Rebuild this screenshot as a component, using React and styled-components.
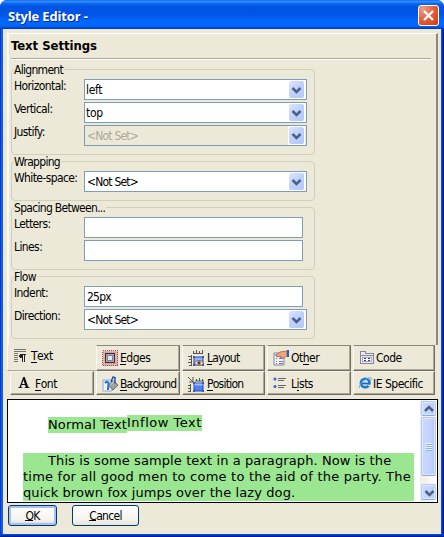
import React from "react";
import styled, { createGlobalStyle, css } from "styled-components";

const face = "#ece9d8";

const GlobalStyle = createGlobalStyle`
  *, *::before, *::after { box-sizing: border-box; }
  body { margin: 0; background: #fff; }
`;

const Window = styled.div`
  width: 444px;
  height: 537px;
  overflow: hidden;
  display: flex;
  flex-direction: column;
  padding: 0 3px 3px;
  border-radius: 7px 7px 0 0;
  background:
    linear-gradient(#0855dd, #0030b8 50%, #00138c) bottom / 100% 3px no-repeat,
    linear-gradient(90deg, #0019cf 0, #0855dd 1px, #166aee 2px, #0855dd 3px, #0855dd 441px, #0441d8 442px, #001ea0 443px, #00138c 444px);
  font-family: "DejaVu Sans Condensed", "DejaVu Sans", sans-serif;
  font-stretch: condensed;
  font-size: 12px;
  line-height: 14px;
  letter-spacing: -0.7px;
  color: #000;
  white-space: nowrap;
`;

const TitleBar = styled.header`
  flex: none;
  height: 29px;
  margin: 0 -3px;
  padding: 5px 5px 3px 8px;
  display: flex;
  justify-content: space-between;
  background: linear-gradient(#0058e6 0, #3a93ff 1px, #2687fc 2px, #0b61ec 4px, #0054e3 7px, #0055e5 14px, #0065fa 20px, #0069ff 25px, #005bec 27px, #003dd0 28px, #0036b8 29px);
`;

const Title = styled.h1`
  margin: 0;
  font: bold 13px/22px "Open Sans", sans-serif;
  letter-spacing: -0.15px;
  color: #fff;
  text-shadow: 1px 1px #0a2a90;
`;

const CloseButton = styled.button`
  width: 21px;
  height: 21px;
  padding: 0;
  border: 1px solid #fff;
  border-radius: 3px;
  background: radial-gradient(circle at 20% 15%, #e9a08a 0, #e5694a 40%, #dd4a22 75%, #c83a10 100%);
  svg { display: block; }
`;

const Client = styled.main`
  flex: 1;
  background: ${face};
  padding: 4px 3px 0 4px;
`;

const Page = styled.section`
  height: 312px;
  width: 431px;
  border-top: 1px solid #fff;
  border-left: 2px solid #faf9f2;
  border-right: 2px solid #8b897a;
  padding: 3px 5px 0 2px;
  display: flex;
  flex-direction: column;
`;

const Heading = styled.h2`
  margin: 0;
  height: 22px;
  font: bold 13px/18px "DejaVu Sans", sans-serif;
  font-stretch: condensed;
  letter-spacing: -0.05px;
  border-bottom: 1px solid #aca899;
  box-shadow: 0 1px #fff;
`;

const Group = styled.section`
  flex: none;
  width: 304px;
  height: ${(p) => p.$height}px;
  margin-top: ${(p) => p.$gap}px;
  border: 1px solid #d0d0bf;
  border-radius: 4px;
  padding: 0 0 0 2px;
`;

const Legend = styled.div`
  width: max-content;
  height: 14px;
  margin: -7px 0 -5px;
  padding-right: 1px;
  background: ${face};
`;

const Fields = styled.div`
  display: grid;
  grid-template-columns: 70px 223px;
  grid-auto-rows: 21px;
  row-gap: 2px;
  padding-top: 7px;
`;

const Label = styled.label`
  line-height: 14px;
  letter-spacing: -0.6px;
`;

const Box = styled.div`
  width: ${(p) => (p.$wide ? 223 : 219)}px;
  height: 21px;
  border: 1px solid #7f9db9;
  background: ${(p) => (p.$disabled ? face : "#fff")};
  color: ${(p) => (p.$disabled ? "#aca899" : "#000")};
  display: flex;
  justify-content: space-between;
  padding: 0 1px 0 ${(p) => (p.$tight ? 1 : 2)}px;
  line-height: 20px;
  letter-spacing: ${(p) => (p.$tight ? -0.35 : -0.8)}px;
`;

const DropButton = styled.span`
  width: 17px;
  height: 19px;
  padding: 1px 0 1px 1px;
  background: #fff;
  svg { display: block; border-radius: 2px; background: linear-gradient(135deg, #dce6ff, #bfd0fc 50%, #b3c7f8); }
`;

const Tabs = styled.nav`
  display: grid;
  grid-template-columns: 86px 86px 85px 86px 84px;
  grid-template-rows: 26px 24px;
  padding-left: 3px;
  width: 430px;
`;

const Tab = styled.div`
  display: flex;
  align-items: flex-start;
  margin-right: ${(p) => (p.$active ? 0 : 2)}px;
  padding: ${(p) => p.$top || 4}px 0 0 ${(p) => p.$left || 5}px;
  border-left: 1px solid #faf9f2;
  border-right: 1px solid #716f64;
  border-bottom: 1px solid #716f64;
  box-shadow: inset -1px -1px #aca899;
  ${(p) => p.$row === 1 && css`border-top: 1px solid #8b897a;`}
  ${(p) => p.$row === 2 && css`border-top: 1px solid #f6f4e8;`}
  ${(p) => p.$active && css`
    margin-left: -3px;
    border-right-color: transparent;
    border-bottom-color: #aca899;
    border-top: 1px solid transparent;
    box-shadow: none;
  `}
  svg { flex: none; display: block; }
`;

const TabText = styled.span`
  padding-left: ${(p) => p.$gap ?? 2}px;
  margin-top: ${(p) => p.$drop ?? 1}px;
  letter-spacing: ${(p) => p.$track ?? -0.5}px;
`;

const Key = styled.span`
  border-bottom: 1px solid #000;
  display: inline-block;
  height: 14px;
`;

const Preview = styled.section`
  width: 431px;
  height: 104px;
  margin-top: 4px;
  border: 1px solid #000;
  background: #fff;
  display: flex;
  justify-content: space-between;
  font: 13px/16px "DejaVu Sans", sans-serif;
  letter-spacing: 0.1px;
`;

const PreviewBody = styled.div`
  padding: 15px 0 0 15px;
`;

const SampleRow = styled.div`
  display: flex;
  align-items: flex-start;
  padding-left: 25px;
`;

const Sample = styled.span`
  width: ${(p) => p.$width}px;
  height: 16px;
  margin-top: ${(p) => p.$drop || 0}px;
  background: #9be691;
  letter-spacing: ${(p) => p.$track}px;
`;

const Paragraph = styled.p`
  margin: 20px 0 0;
  width: 391px;
  background: #9be691;
`;

const Line = styled.span`
  display: block;
  padding-left: ${(p) => p.$indent || 0}px;
  letter-spacing: ${(p) => p.$track ?? 0.1}px;
`;

const ScrollBar = styled.div`
  width: 17px;
  height: 102px;
  padding: 1px;
  display: flex;
  flex-direction: column;
  background: linear-gradient(90deg, #eeede5, #fefefb);
`;

const ScrollPart = styled.div`
  height: ${(p) => p.$height}px;
  margin-top: ${(p) => p.$gap || 0}px;
  border: 1px solid #b4c8f6;
  border-bottom-color: #8ba9e4;
  border-radius: 2px;
  box-shadow: inset 0 0 0 1px #dde7ff;
  background: linear-gradient(90deg, #cad8ff, #c3d3fd 60%, #b5c8f7);
  display: flex;
  align-items: center;
  justify-content: center;
`;

const Actions = styled.footer`
  display: flex;
  gap: 15px;
  padding: 2px 0 0 1px;
`;

const Button = styled.button`
  width: ${(p) => p.$width}px;
  height: 21px;
  padding: 0;
  border: 1px solid #003c74;
  border-radius: 3px;
  background: linear-gradient(#fff, #f5f4ee 70%, #e6e2d6);
  box-shadow: ${(p) => (p.$primary ? "inset 0 0 0 2px #a9c1f2, inset 0 -2px 1px #7d9be0" : "none")};
  font: inherit;
  letter-spacing: -0.7px;
  line-height: 18px;
  color: #000;
`;

function Chevron({ up }) {
  return <path d={up ? "M3 9l4-4 4 4" : "M3.5 6l4 4 4-4"} fill="none" stroke="#4d6185" strokeWidth="2.5" />;
}

function Select({ value, disabled }) {
  return (
    <Box $wide $disabled={disabled} $tight={value[0] !== "<"}>
      <span>{value}</span>
      <DropButton>
        <svg width="15" height="17" viewBox="0 0 15 17"><g transform="translate(0 1)"><Chevron /></g></svg>
      </DropButton>
    </Box>
  );
}

function SettingsGroup({ title, height, gap = 7, children }) {
  return (
    <Group $height={height} $gap={gap}>
      <Legend>{title}</Legend>
      <Fields>{children}</Fields>
    </Group>
  );
}

const TextIcon = () => (
  <svg width="13" height="15" viewBox="0 0 13 15" shapeRendering="crispEdges">
    <path d="M0 1.5h12M0 3.5h12M0 5.5h4M0 7.5h4M0 9.5h4M0 11.5h4M0 13.5h4" stroke="#77766e" />
    <path d="M6 6h6v1h-1v7h-1V7H9v7H8v-4H6V9H5V7h1z" fill="#222" />
  </svg>
);
const FontIcon = () => (
  <svg width="12" height="13" viewBox="0 0 12 13">
    <path fillRule="evenodd" d="M5.2 1h1.5l3.6 10 1.4.5v.5H6.5v-.5l1.3-.4-.7-2.1H3.7L3 11l1.4.5v.5H.2v-.5L1.6 11zM4 8h2.8L5.4 4z" fill="#111" />
  </svg>
);
const EdgesIcon = () => (
  <svg width="16" height="16" viewBox="0 0 16 16" shapeRendering="crispEdges">
    <rect x=".5" y=".5" width="15" height="15" fill="#e6b0a8" stroke="#9c5050" strokeDasharray="1 1" />
    <path d="M1 2.5h14M1 13.5h14" stroke="#cd9088" strokeDasharray="1 1" />
    <rect x="3.5" y="3.5" width="9" height="9" fill="#a8a8ad" stroke="#333" />
    <rect x="5.5" y="5.5" width="5" height="5" fill="#e6e9fb" stroke="#7c83a8" />
  </svg>
);
const BackgroundIcon = () => (
  <svg width="17" height="17" viewBox="0 0 17 17">
    <path d="M1 4h9v11H1z" fill="#edf3ff" stroke="#98a4cb" />
    <path d="M3 7c2-2 4-1 3.500 1.500l-.5 5.500" stroke="#2871df" strokeWidth="2.200" fill="none" />
    <path d="M6.500 9l5-4 4.500 4-5 5z" fill="#a3a39b" stroke="#666b70" />
    <path d="M8.500 8.500l5-4" stroke="#ddd" />
    <path d="M9 6l2-5 2 .5v6" stroke="#1c48a8" strokeWidth="1.400" fill="none" />
  </svg>
);
const LayoutIcon = ({ position }) => (
  <svg width="17" height="17" viewBox="0 0 17 17">
    {position
      ? <path d="M0 1l5 5M5 1v5H1M7 5h9M8.5 3v2M11.5 2v3M14.5 3v2M2.5 8v8M0 9.5h3M0 12.5h3M0 15.5h3" stroke="#55544f" fill="none" />
      : <path d="M5 3.5h10M5.500 1v3M8.500 0v3M11.500 1v3M14.500 0v3M3.500 5v11M0 6.500h4M1 9.500h3M0 12.500h4M1 15.500h3" stroke="#55544f" fill="none" />}
    <path d="M6 7h9v8H6z" fill={position ? "#4c80ef" : "#92b3fa"} stroke="#244bb8" />
    {position && <path d="M6.5 7.500h8v2h-8z" fill="#9fbdfd" />}
    <path d="M5 6h2v2H5zM14 6h2v2h-2zM5 14h2v2H5zM14 14h2v2h-2z" fill="#4052ae" />
    {!position && <><path d="M6 13q5-5 10 0q-5 5-10 0" fill="#eee6d9" stroke="#8a6450" /><circle cx="11" cy="13" r="1.7" fill="#4b3d43" /></>}
  </svg>
);
const OtherIcon = () => (
  <svg width="17" height="17" viewBox="0 0 17 17">
    <path d="M1 3h10v12H1z" fill="#f3f4fb" stroke="#7b84aa" />
    <path d="M2 4h8v2H2z" fill="#9eb1dd" />
    <path d="M3 8.5h1M6 8.5h4M3 11.5h1M6 11.5h4M3 13.5h1M6 13.5h4" stroke="#7479ac" />
    <path d="M3 5l4-3 7-1v5l-4 2H7l1-2-4 1z" fill="#eda77f" stroke="#a95d42" strokeWidth=".8" />
    <path d="M14 0h2v7h-2z" fill="#3058bb" />
  </svg>
);
const ListsIcon = () => (
  <svg width="14" height="13" viewBox="0 0 14 13">
    <path d="M5 2.5h8M5 4.5h6M5 9.5h8M5 11.5h6" stroke="#666" shapeRendering="crispEdges" />
    <circle cx="2" cy="3" r="1.6" fill="#4462d7" /><circle cx="2" cy="10.500" r="1.6" fill="#4462d7" />
  </svg>
);
const CodeIcon = () => (
  <svg width="16" height="15" viewBox="0 0 16 15" shapeRendering="crispEdges">
    <path d="M1.5 4.5v-3h5v2h8v10h-13z" fill="#e8e7f3" stroke="#888799" />
    <path d="M2 5.5h12" stroke="#88899a" /><rect x="3.5" y="7.5" width="9" height="4" fill="#fff" stroke="#aaa9bd" />
    <path d="M5 8.5h2M9 8.5h2M5 10.5h2M9 10.5h2" stroke="#353594" />
  </svg>
);
const IEIcon = () => (
  <svg width="13" height="14" viewBox="0 0 13 14">
    <circle cx="6.2" cy="7" r="4.300" fill="#cfe9fb" stroke="#2478c8" strokeWidth="2.6" />
    <path d="M3 7.5h7.5" stroke="#1e68b8" strokeWidth="1.8" />
    <path d="M9 9.300h3" stroke="#ece9d8" strokeWidth="1.200" />
    <path d="M1 12c-3-2 7-12 11-10 1 1 0 2-1 3" fill="none" stroke="#4eaae8" />
  </svg>
);

export default function App() {
  return (
    <>
      <GlobalStyle />
      <Window>
        <TitleBar>
          <Title>Style Editor -</Title>
          <CloseButton aria-label="Close">
            <svg width="19" height="19" viewBox="0 0 19 19"><path d="M5 5l9 9M14 5l-9 9" stroke="#fff" strokeWidth="2.3" /></svg>
          </CloseButton>
        </TitleBar>
        <Client>
          <Page>
            <Heading>Text Settings</Heading>
            <SettingsGroup title="Alignment" height={86} gap={10}>
              <Label>Horizontal:</Label><Select value="left" />
              <Label>Vertical:</Label><Select value="top" />
              <Label>Justify:</Label><Select value="<Not Set>" disabled />
            </SettingsGroup>
            <SettingsGroup title="Wrapping" height={40} gap={6}>
              <Label>White-space:</Label><Select value="<Not Set>" />
            </SettingsGroup>
            <SettingsGroup title="Spacing Between..." height={63} gap={6}>
              <Label>Letters:</Label><Box />
              <Label>Lines:</Label><Box />
            </SettingsGroup>
            <SettingsGroup title="Flow" height={63} gap={6}>
              <Label>Indent:</Label><Box>25px</Box>
              <Label>Direction:</Label><Select value="<Not Set>" />
            </SettingsGroup>
          </Page>
          <Tabs>
            <Tab $row={1} $active $top={2} $left={6}><TextIcon /><TabText $gap={4}><Key>T</Key>ext</TabText></Tab>
            <Tab $row={1}><EdgesIcon /><TabText><Key>E</Key>dges</TabText></Tab>
            <Tab $row={1}><LayoutIcon /><TabText $track={-0.7}><Key>L</Key>ayout</TabText></Tab>
            <Tab $row={1}><OtherIcon /><TabText $gap={1}>Ot<Key>h</Key>er</TabText></Tab>
            <Tab $row={1}><CodeIcon /><TabText $gap={1}>Code</TabText></Tab>
            <Tab $row={2} $left={7}><FontIcon /><TabText $gap={5}><Key>F</Key>ont</TabText></Tab>
            <Tab $row={2}><BackgroundIcon /><TabText $gap={1} $track={-0.8}><Key>B</Key>ackground</TabText></Tab>
            <Tab $row={2}><LayoutIcon position /><TabText $track={-0.75}><Key>P</Key>osition</TabText></Tab>
            <Tab $row={2}><ListsIcon /><TabText $gap={4}>L<Key>i</Key>sts</TabText></Tab>
            <Tab $row={2}><IEIcon /><TabText $gap={1}>IE Specific</TabText></Tab>
          </Tabs>
          <Preview>
            <PreviewBody>
              <SampleRow>
                <Sample $width={79} $drop={2} $track={0.15}>Normal Text</Sample>
                <Sample $width={75} $track={0.5}>Inflow Text</Sample>
              </SampleRow>
              <Paragraph>
                <Line $indent={25}>This is some sample text in a paragraph. Now is the</Line>
                <Line $track={0.22}>time for all good men to come to the aid of the party. The</Line>
                <Line>quick brown fox jumps over the lazy dog.</Line>
              </Paragraph>
            </PreviewBody>
            <ScrollBar>
              <ScrollPart $height={15}><svg width="14" height="13"><Chevron up /></svg></ScrollPart>
              <ScrollPart $height={59} $gap={1}><svg width="7" height="8"><path d="M0 .5h7M0 2.5h7M0 4.5h7M0 6.5h7" stroke="#eef4fe" /><path d="M1 1.5h6M1 3.5h6M1 5.5h6M1 7.5h6" stroke="#8cb0f8" /></svg></ScrollPart>
              <ScrollPart $height={16} $gap={8}><svg width="15" height="14"><Chevron /></svg></ScrollPart>
            </ScrollBar>
          </Preview>
          <Actions>
            <Button $width={49} $primary><Key>O</Key>K</Button>
            <Button $width={67}><Key>C</Key>ancel</Button>
          </Actions>
        </Client>
      </Window>
    </>
  );
}
